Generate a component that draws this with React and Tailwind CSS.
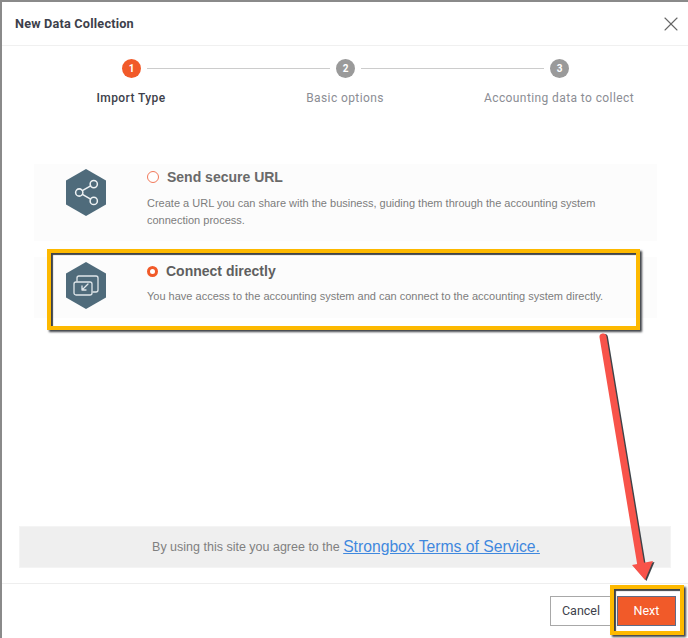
import React from 'react';
import { Share2, X } from 'lucide-react';

const steps = [
  { num: 1, label: 'Import Type', active: true },
  { num: 2, label: 'Basic options' },
  { num: 3, label: 'Accounting data to collect' },
];

const Hexagon = ({ children }) => (
  <div className="relative w-[42px] h-[47px] flex items-center justify-center">
    <svg className="absolute inset-0" width="42" height="47" viewBox="0 0 42 47">
      <polygon points="21,0 41,11.5 41,35.5 21,47 1,35.5 1,11.5" fill="#4f6b7b" />
    </svg>
    <div className="relative flex">{children}</div>
  </div>
);

const ConnectIcon = () => (
  <svg width="26" height="21" viewBox="0 0 26 21" fill="none" stroke="#dfe6ea" strokeWidth="1.3" strokeLinecap="round" strokeLinejoin="round">
    <path d="M4 6V3a2 2 0 0 1 2-2h17a2 2 0 0 1 2 2v12a2 2 0 0 1-2 2h-3" />
    <rect x="1" y="7" width="18" height="13" rx="2" />
    <path d="M15 9l-6 6M9 11v4h4" />
  </svg>
);

const App = () => {
  return (
    <div className="relative w-[688px] h-[638px] overflow-hidden bg-white border-t-2 border-l-2 border-[#8a8a8a] text-[#3d3f4b] font-['Roboto',sans-serif]">
      {/* header */}
      <div className="h-[44px] flex items-center justify-between pl-[13px] pr-[5px] border-b border-[#f0f0f0]">
        <h1 className="text-[12.7px] font-bold tracking-[0.2px] text-[#3d3f4b]">New Data Collection</h1>
        <X size={24} strokeWidth={1.1} className="text-[#666]" />
      </div>

      {/* stepper */}
      <div className="flex pl-[120px] pt-[13px] items-center">
        <div className="w-[19px] h-[19px] rounded-full bg-[#f15a29] text-white text-[10px] font-bold flex items-center justify-center">1</div>
        <div className="w-[183px] h-px bg-[#cccccc] ml-[6px] mr-[6px]" />
        <div className="w-[19px] h-[19px] rounded-full bg-[#9a9a9a] text-white text-[10px] font-bold flex items-center justify-center">2</div>
        <div className="w-[183px] h-px bg-[#cccccc] ml-[6px] mr-[6px]" />
        <div className="w-[19px] h-[19px] rounded-full bg-[#9a9a9a] text-white text-[10px] font-bold flex items-center justify-center">3</div>
      </div>
      <div className="relative h-[16px] mt-[12px] text-xs tracking-[0.4px]">
        {steps.map((step, i) => (
          <span
            key={step.num}
            className={`absolute top-0 -translate-x-1/2 whitespace-nowrap ${step.active ? 'font-medium text-[#3d3f4b]' : 'text-[#8b8d94]'} ${i === 0 ? 'left-[129px]' : i === 1 ? 'left-[343px]' : 'left-[557px]'}`}
          >
            {step.label}
          </span>
        ))}
      </div>

      {/* options */}
      <div className="mt-[58px] ml-[32px] w-[623px] font-['Liberation_Sans',sans-serif]">
        <div className="h-[77px] bg-[#fcfcfc] flex">
          <div className="w-[31px] shrink-0" />
          <div className="pt-[5px]"><Hexagon><Share2 size={29} strokeWidth={1.25} color="#eef2f4" /></Hexagon></div>
          <div className="ml-[40px]">
            <div className="flex items-center mt-[3px]">
              <span className="w-[12px] h-[12px] rounded-full border border-[#f2795a] bg-white" />
              <span className="ml-[8px] text-sm font-bold text-[#6a6a6a]">Send secure URL</span>
            </div>
            <p className="mt-[8px] w-[480px] text-[11px] leading-[17px] text-[#7c7c7c]">
              Create a URL you can share with the business, guiding them through the accounting system connection process.
            </p>
          </div>
        </div>
        <div className="mt-[16px] h-[61px] bg-[#fcfcfc] flex">
          <div className="w-[31px] shrink-0" />
          <div className="pt-[5px]"><Hexagon><ConnectIcon /></Hexagon></div>
          <div className="ml-[40px]">
            <div className="flex items-center mt-[4px]">
              <span className="w-[11px] h-[11px] rounded-full border-[3px] border-[#f15a29] bg-white" />
              <span className="ml-[8px] text-sm font-bold text-[#5f5f5f]">Connect directly</span>
            </div>
            <p className="mt-[7px] whitespace-nowrap text-[11px] leading-[17px] text-[#7c7c7c]">
              You have access to the accounting system and can connect to the accounting system directly.
            </p>
          </div>
        </div>
      </div>

      {/* terms */}
      <div className="mt-[208px] ml-[17px] w-[652px] h-[42px] pl-[2px] bg-[#efefef] border border-[#f4f4f4] flex items-center justify-center font-['Liberation_Sans',sans-serif] text-[12.5px] text-[#808080]">
        By using this site you agree to the&nbsp;
        <a className="text-[15.7px] text-[#3f88de] underline">Strongbox Terms of Service.</a>
      </div>

      {/* footer */}
      <div className="mt-[15px] pt-[12px] border-t border-[#eeeeee] flex justify-end pr-[12px]">
        <button className="w-[62px] h-[30px] bg-white border border-[#a8a8a8] text-[12.5px] text-[#3d3f4b] mr-[5px]">Cancel</button>
        <button className="w-[59px] h-[30px] bg-[#f15a29] border border-[#5f6b85] text-[12.5px] text-white">Next</button>
      </div>

      {/* annotations */}
      <div className="absolute left-[45px] top-[247px] w-[593px] h-[81px] border-4 border-[#fdb900] shadow-[inset_2px_2px_1px_#3f4348,2px_2px_2px_#3f4348]" />
      <div className="absolute left-[608px] top-[583px] w-[74px] h-[50px] border-4 border-[#fdb900] shadow-[inset_2px_2px_1px_#3f4348,2px_2px_2px_#3f4348]" />
      <svg className="absolute left-[588px] top-[323px]" width="70" height="260" viewBox="0 0 70 260" fill="none">
        <path d="M13 12 L51 241" stroke="#3f4348" strokeWidth="7" strokeLinecap="round" transform="translate(1.5 0.5)" />
        <polygon points="42,240 63,236 55,255" fill="#3f4348" transform="translate(1.5 1)" />
        <path d="M13 12 L51 241" stroke="#f8534a" strokeWidth="7" strokeLinecap="round" />
        <polygon points="42,240 63,236 55,255" fill="#f8534a" />
      </svg>
    </div>
  );
};

export default App;
